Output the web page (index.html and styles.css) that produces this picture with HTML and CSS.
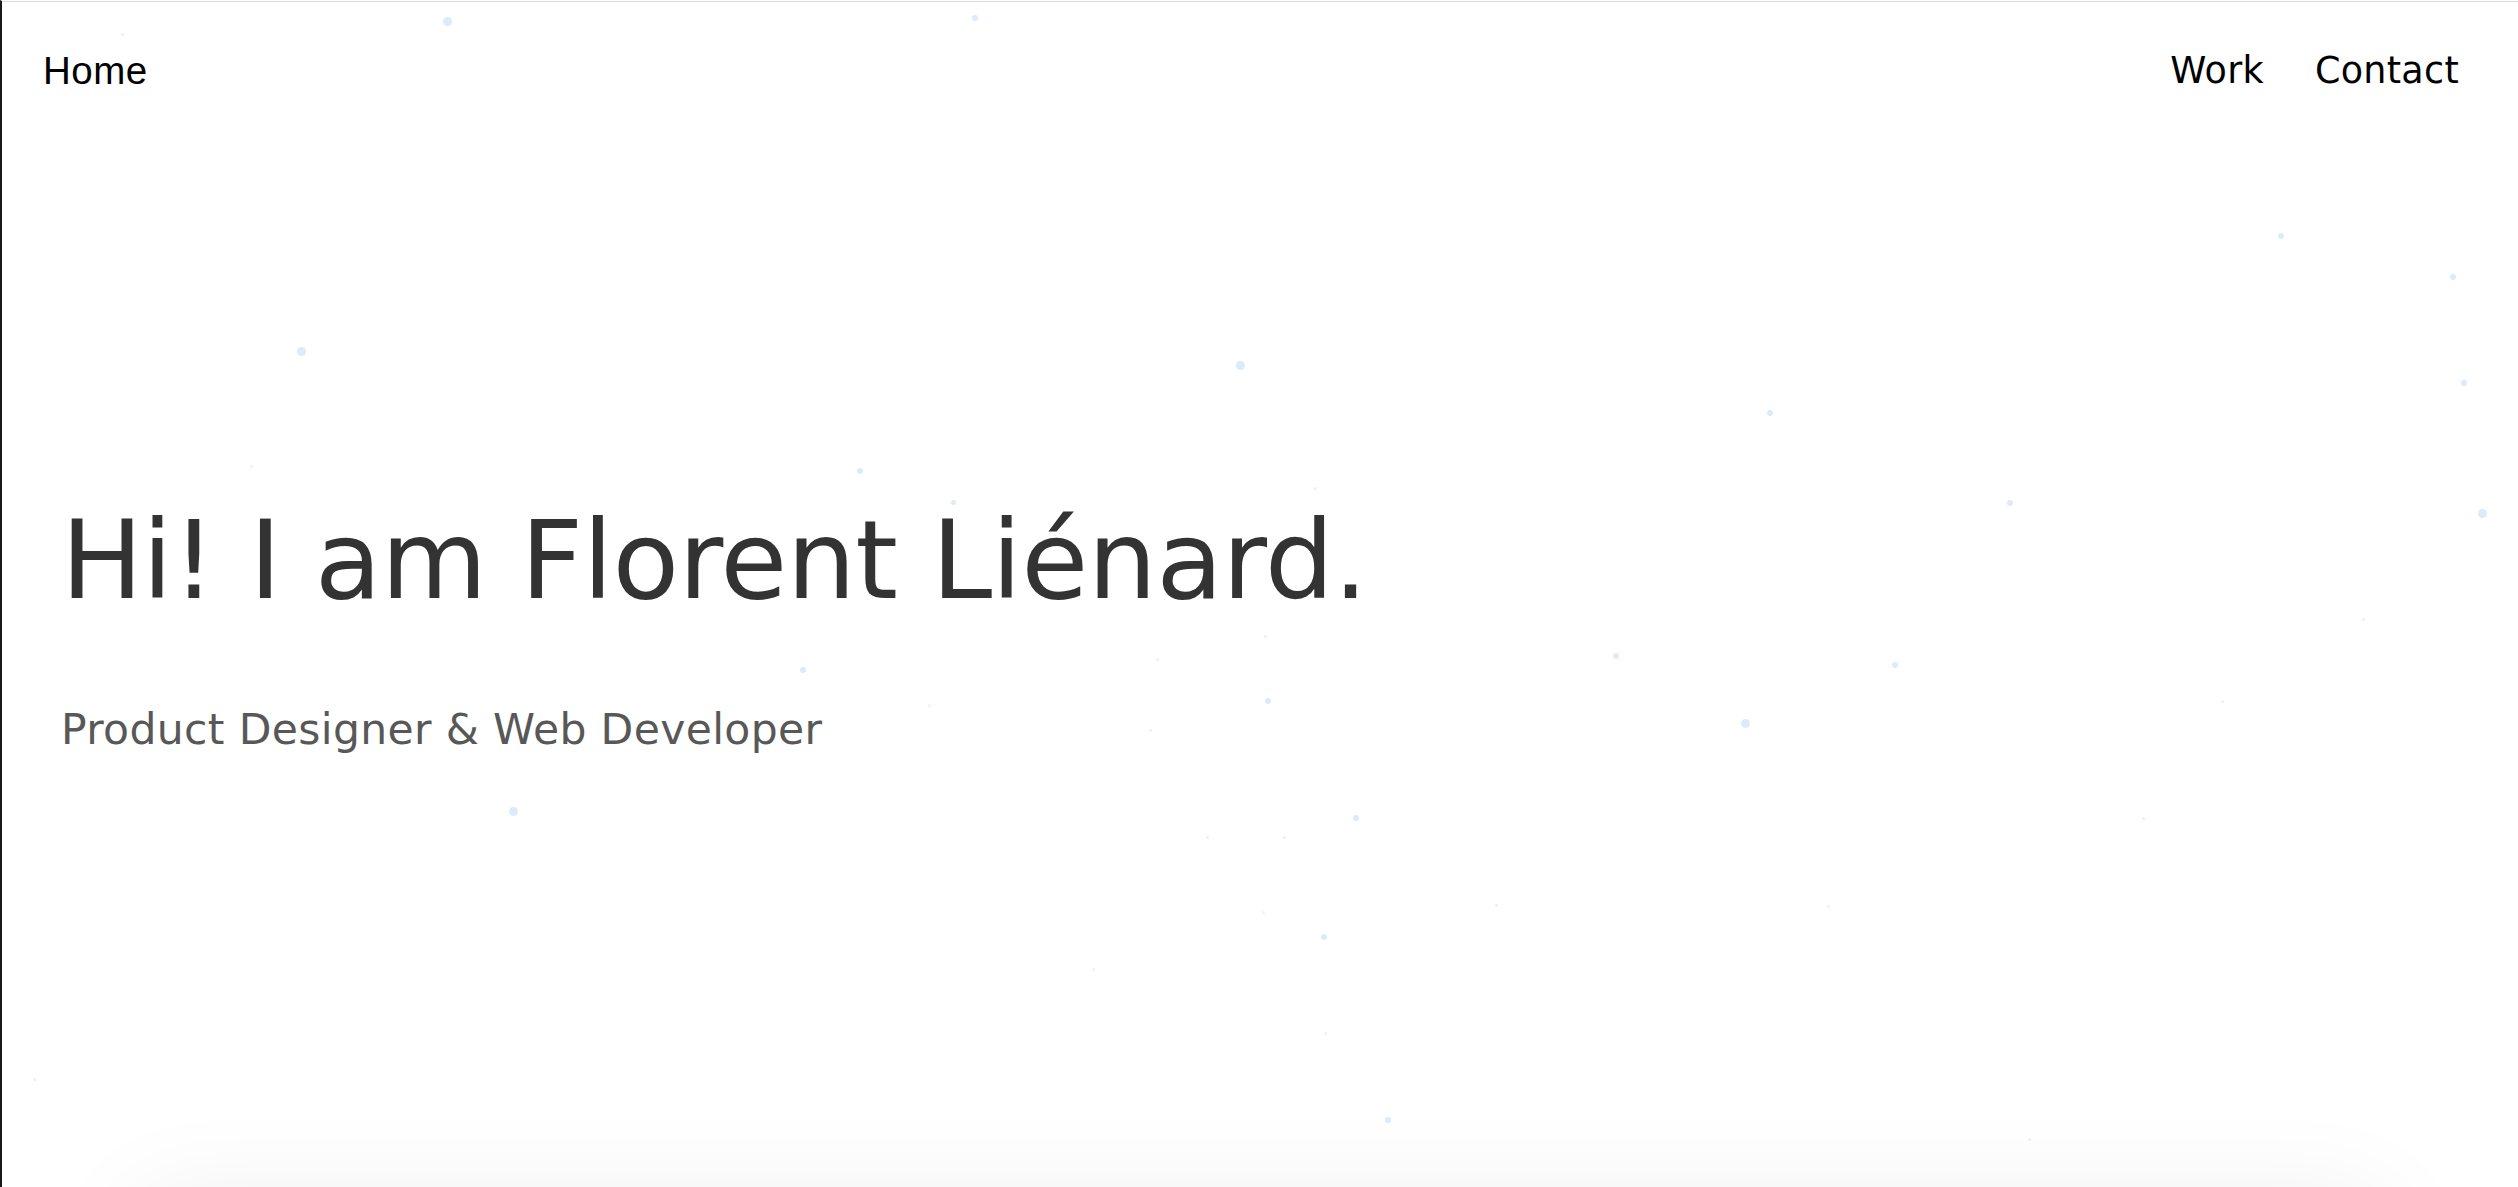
FILE: index.html
```html
<!DOCTYPE html>
<html lang="en">
<head>
<meta charset="utf-8">
<title>Florent Liénard</title>
<link rel="stylesheet" href="styles.css">
</head>
<body>
<div class="frame">
  <section class="hero">
    <div class="particles" aria-hidden="true">
      <span class="dot big" style="left:445px;top:19px"></span>
      <span class="dot" style="left:973px;top:16px"></span>
      <span class="dot tiny" style="left:120px;top:32px"></span>
      <span class="dot big" style="left:299px;top:349px"></span>
      <span class="dot big" style="left:1238px;top:363px"></span>
      <span class="dot" style="left:2279px;top:234px"></span>
      <span class="dot" style="left:2451px;top:275px"></span>
      <span class="dot" style="left:2462px;top:381px"></span>
      <span class="dot" style="left:1768px;top:411px"></span>
      <span class="dot" style="left:858px;top:469px"></span>
      <span class="dot tiny" style="left:249px;top:464px"></span>
      <span class="dot" style="left:2008px;top:501px"></span>
      <span class="dot big" style="left:2480px;top:511px"></span>
      <span class="dot tiny" style="left:2361px;top:617px"></span>
      <span class="dot" style="left:801px;top:668px"></span>
      <span class="dot" style="left:1614px;top:654px"></span>
      <span class="dot" style="left:1893px;top:663px"></span>
      <span class="dot tiny" style="left:1155px;top:657px"></span>
      <span class="dot" style="left:1266px;top:699px"></span>
      <span class="dot tiny" style="left:927px;top:703px"></span>
      <span class="dot big" style="left:1743px;top:721px"></span>
      <span class="dot tiny" style="left:1148px;top:728px"></span>
      <span class="dot big" style="left:511px;top:809px"></span>
      <span class="dot" style="left:1354px;top:816px"></span>
      <span class="dot tiny" style="left:1205px;top:835px"></span>
      <span class="dot tiny" style="left:1282px;top:835px"></span>
      <span class="dot tiny" style="left:2141px;top:816px"></span>
      <span class="dot tiny" style="left:1494px;top:903px"></span>
      <span class="dot tiny" style="left:1826px;top:904px"></span>
      <span class="dot" style="left:1322px;top:935px"></span>
      <span class="dot tiny" style="left:1261px;top:910px"></span>
      <span class="dot tiny" style="left:1091px;top:967px"></span>
      <span class="dot tiny" style="left:1323px;top:1031px"></span>
      <span class="dot" style="left:1386px;top:1118px"></span>
      <span class="dot tiny" style="left:2027px;top:1137px"></span>
      <span class="dot tiny" style="left:32px;top:1077px"></span>
      <span class="dot tiny" style="left:2220px;top:699px"></span>
      <span class="dot small" style="left:952px;top:501px"></span>
      <span class="dot tiny" style="left:1313px;top:486px"></span>
      <span class="dot tiny" style="left:1263px;top:634px"></span>
    </div>
    <header class="nav">
      <a class="home" href="#">Home</a>
      <nav class="links">
        <a href="#">Work</a>
        <a href="#">Contact</a>
      </nav>
    </header>
    <div class="intro">
      <h1 class="title">Hi! I am Florent Liénard.</h1>
      <p class="subtitle">Product Designer &amp; Web Developer</p>
    </div>
  </section>
  <section class="next"></section>
</div>
</body>
</html>
```
FILE: styles.css
```css
* { box-sizing: border-box; }
html, body { margin: 0; padding: 0; background: #ffffff; }
body { overflow: hidden; }
.frame {
  border-top: 1px solid #ffffff;
  border-left: 2px solid #1c171b;
  min-height: 1187px;
}
.hero {
  position: relative;
  height: 1203px;
  border-top: 1px solid #dcdcdc;
  background: #ffffff;
}
.particles { position: absolute; inset: 0; z-index: 0; pointer-events: none; }
.dot {
  position: absolute;
  width: 6px; height: 6px;
  margin: -3px 0 0 -3px;
  border-radius: 50%;
  background: #dcebf9;
}
.dot.big { width: 9px; height: 9px; margin: -4px 0 0 -4px; }
.dot.small { width: 5px; height: 5px; }
.dot.tiny { width: 3px; height: 3px; margin: -1px 0 0 -1px; background: #e8f1fb; }
.nav {
  position: relative;
  z-index: 1;
  display: flex;
  justify-content: space-between;
  align-items: flex-start;
  padding: 50px 59px 0 41px;
}
.nav a { color: #000000; text-decoration: none; line-height: 38px; }
.home {
  font-family: "Liberation Sans", Arial, sans-serif;
  font-size: 38.5px;
  letter-spacing: 0.5px;
}
.links { display: flex; gap: 51px; }
.links a {
  font-family: "DejaVu Sans", sans-serif;
  font-size: 36.5px;
  letter-spacing: 0.3px;
}
.intro { position: relative; z-index: 1; padding: 405px 0 0 59px; }
.title {
  margin: 0;
  font-family: "DejaVu Sans", sans-serif;
  font-weight: 400;
  font-size: 109px;
  line-height: 132px;
  letter-spacing: -0.6px;
  color: #333333;
}
.subtitle {
  margin: 78px 0 0;
  font-family: "DejaVu Sans", sans-serif;
  font-size: 42.5px;
  line-height: 50px;
  letter-spacing: 0.35px;
  color: #585858;
}
.next {
  width: 2240px;
  height: 400px;
  margin: 0 auto;
  background: #ffffff;
  box-shadow: 0 0 100px rgba(0,0,0,0.075);
  position: relative;
}
```
